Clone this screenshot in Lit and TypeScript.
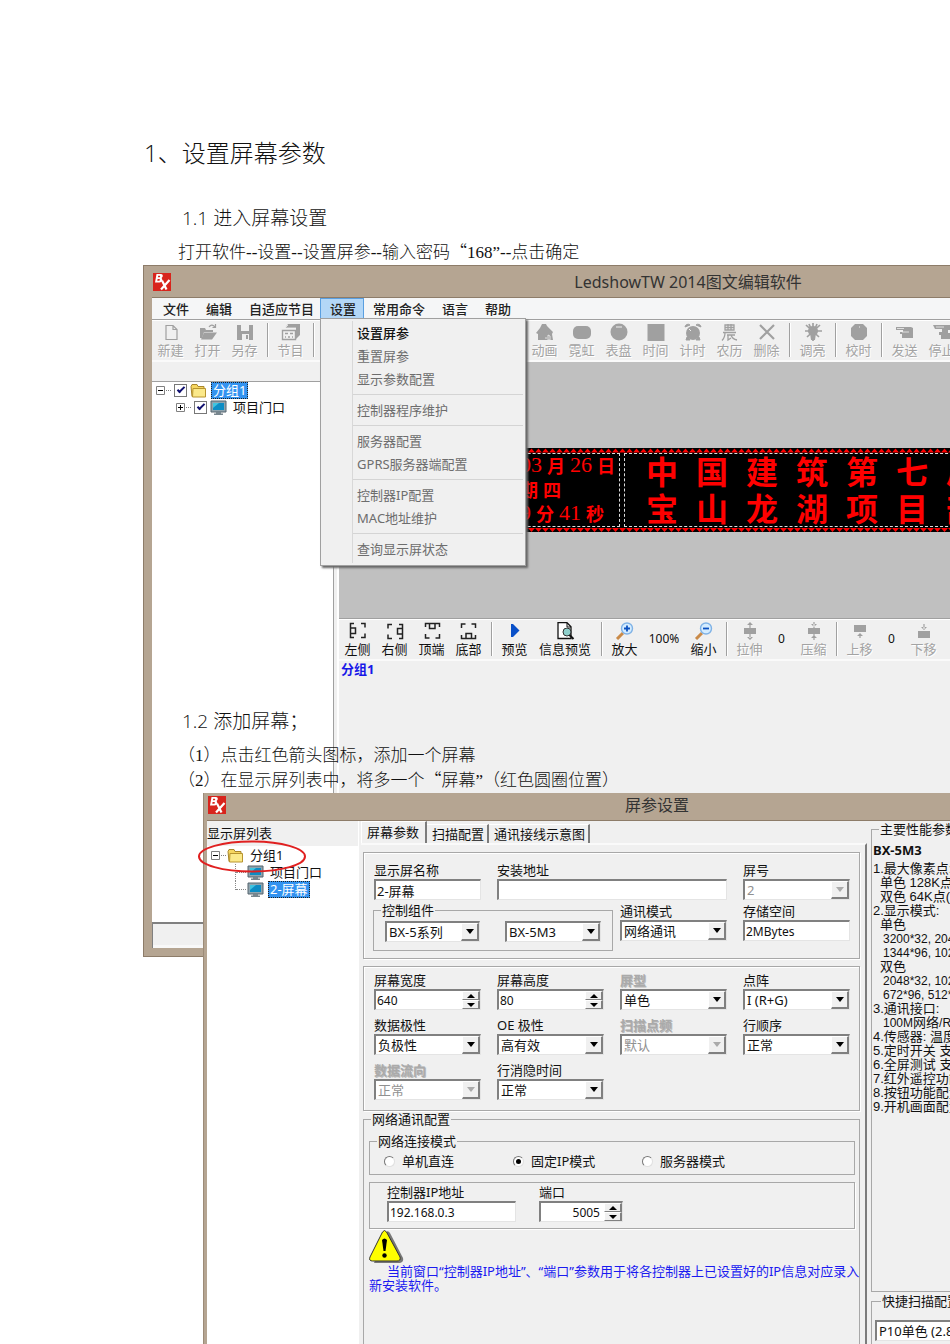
import { LitElement, html, svg, css, nothing, TemplateResult, SVGTemplateResult } from "lit";
import { customElement, state } from "lit/decorators.js";
import { classMap } from "lit/directives/class-map.js";

type Icon = SVGTemplateResult;

const G = "#a0a0a0";

const icons: Record<string, Icon> = {
  create: svg`<path d="M5 2.5h7l4 4v10H5z M12 2.5v4h4" fill="none" stroke="${G}" stroke-width="1.2"/>`,
  open: svg`<path d="M2 5h5l1 2h7v2H6l-2 6H2z" fill="${G}"/><path d="M6 9.500h13l-5 7H3z" fill="${G}"/><path d="M11 4c2-3 4-2 6 0M17.500 1v3.500h-3" fill="none" stroke="${G}" stroke-width="1.200"/>`,
  save: svg`<path d="M2 2h16v15H2z" fill="${G}"/><path d="M6 2h8v6H6z M7 11h7v6H7z" fill="#f0f0f0"/><path d="M11 12h2v4h-2z" fill="${G}"/>`,
  program: svg`<path d="M7 1h12v11l-4 4V5H4z" fill="${G}"/><path d="M4 5l3-3M4 5h11" stroke="#f0f0f0" stroke-width=".8"/><path d="M1.500 7.500h13v9h-13z" fill="#f0f0f0" stroke="${G}" stroke-width="1.400"/><path d="M4 10.500h3M9 10.500h3M4 14h1M7 14h2M11 14h1" stroke="${G}" stroke-width="1.400"/>`,
  house: svg`<path d="M7 1h4l1 2 6 6-1 2 1 6H3V11L1 10l4-5z" fill="${G}"/><path d="M13 12l2 1v4h-2zM10 15h2" stroke="#f0f0f0" fill="none" stroke-width=".8"/>`,
  neon: svg`<rect x="1" y="3" width="18" height="13" rx="5" fill="${G}"/>`,
  dial: svg`<circle cx="10" cy="9" r="8.500" fill="${G}"/><path d="M7 4h6" stroke="#f0f0f0" stroke-width="1"/>`,
  square: svg`<path d="M1.500 1h17v17h-17z" fill="${G}"/>`,
  alarm: svg`<circle cx="10" cy="10" r="7" fill="${G}"/><path d="M2 4a3 3 0 0 1 5-2zM18 4a3 3 0 0 0-5-2zM4 14l-1 3h4zM16 14l1 3h-4z" fill="${G}" stroke="${G}"/><path d="M6 6l2 2" stroke="#f0f0f0"/>`,
  lunar: svg`<path d="M5 2h9v5H5z M5 4.500h9 M8 1v6 M11 1v6 M3 9.500h13 M5 9.500c0 4-1 6-3 8 M7 12h8 M8 12v5l3-2 M11 12c1 3 3 4.500 6 5" fill="none" stroke="${G}" stroke-width="1.300"/>`,
  cross: svg`<path d="M3 2l14 14M17 2L3 16" stroke="${G}" stroke-width="2.200"/>`,
  bright: svg`<circle cx="10" cy="8" r="5" fill="${G}"/><path d="M10 0v18M3 2l13 12M17 2L4 14M2 8h17M6 1l3 7M14 1l-3 7" stroke="${G}" stroke-width="1.700"/><path d="M7 10h6l-1 7H8z" fill="${G}"/>`,
  octagon: svg`<path d="M6 1h8l4 4v8l-4 4H6l-4-4V5z" fill="${G}"/><path d="M10 4h1" stroke="#f0f0f0"/>`,
  send: svg`<path d="M1 4h15l2 1v10H7v-4H5V9h3V7H1z" fill="${G}"/><path d="M2 5.500h7M7 9h7" stroke="#f0f0f0" stroke-width=".8"/>`,
  halt: svg`<path d="M1 2h17v5h-2v3h3v6H9v-4H7V9h3V6H3z" fill="${G}"/><path d="M4 4h8" stroke="#f0f0f0" stroke-width=".8"/>`,
  play: svg`<path d="M6 2h2l6.500 6.500L8 15H6z" fill="#0a50c8"/>`,
  inspect: svg`<path d="M3 .7h9l4 4V16.500H3z" fill="#fff" stroke="#111" stroke-width="1.300"/><path d="M12 1v4h4" fill="none" stroke="#111"/><circle cx="12" cy="10" r="4" fill="#8fd0cc" stroke="#333"/><path d="M14.500 13l4 4" stroke="#111" stroke-width="2"/>`,
  zoomIn: svg`<path d="M8 11l-6 6" stroke="#c98a48" stroke-width="3"/><circle cx="12" cy="6.500" r="5.500" fill="#d4ecff" stroke="#7fb2e6" stroke-width="1.400"/><path d="M9 6.500h6M12 3.500v6" stroke="#0b50c0" stroke-width="1.800"/>`,
  zoomOut: svg`<path d="M8 11l-6 6" stroke="#c98a48" stroke-width="3"/><circle cx="12" cy="6.500" r="5.500" fill="#d4ecff" stroke="#7fb2e6" stroke-width="1.400"/><path d="M9 6.500h6" stroke="#0b50c0" stroke-width="1.800"/>`,
  stretch: svg`<path d="M4 6h12v6H4z M10 0l3 3H7z M10 18l3-3H7z M9.400 2h1.200v14H9.400z" fill="${G}"/>`,
  shrink: svg`<path d="M4 6h12v6H4z M10 5l3-3H7z M10 13l3 3H7z M9.400 0h1.200v18H9.400z" fill="${G}"/>`,
  up: svg`<path d="M4 3h12v7H4z M10 11l3 3H7z M9.400 12h1.200v4H9.400z" fill="${G}"/>`,
  down: svg`<path d="M4 9h12v7H4z M10 8l3-3H7z M9.400 2h1.200v5H9.400z" fill="${G}"/>`,
};

for (const [name, turn] of [["left", 0], ["right", 180], ["top", 90], ["bottom", 270]] as const) {
  icons[name] = svg`<g transform="rotate(${turn} 10 9)" fill="none" stroke="#222" stroke-width="1.500">
    <path d="M6 1.500H2.500v14H6M2.500 6h5v5.500h-5M13 1.500h4v4M17 11.500v4h-4"/></g>`;
}

const icon = (name: string) =>
  html`<svg class="icon" viewBox="0 0 20 18" aria-hidden="true">${icons[name]}</svg>`;

const logo = html`<svg class="logo" viewBox="0 0 18 18" aria-hidden="true">
  <rect width="18" height="18" fill="#d8241c"/>
  <path fill="#fff" fill-rule="evenodd" d="M3.500 1h4.500c2.300 0 2.400 3.300.3 4 1.700.6 1.200 4.500-1.800 4.500H2zM5.200 2.700l-.3 1.500h1.600c.9 0 .9-1.500.2-1.500zM4.600 5.900l-.3 1.800h1.800c1 0 1-1.800.2-1.800z"/>
  <path d="M9 7.500l4.500 9M16.500 7L8 16.500" stroke="#fff" stroke-width="2.200"/>
</svg>`;

const folder = html`<svg class="glyph" viewBox="0 0 17 15" aria-hidden="true">
  <path d="M1 3l1-2h5l1 2h6v10H2z" fill="#f6d660" stroke="#a8862c"/>
  <path d="M3 5h12.500v8.500H2.500z" fill="#fbe98a" stroke="#b8942e"/></svg>`;

const monitor = html`<svg class="glyph" viewBox="0 0 17 16" aria-hidden="true">
  <path d="M1 1h15v11H1z" fill="#8fa4ae" stroke="#56656e"/>
  <path d="M3 3h11v7H3z" fill="#0c8cc4"/><path d="M3 3h6L3 8z" fill="#3fc4e0"/>
  <path d="M6 12h5v1.500h2V15H4v-1.500h2z" fill="#78868e"/></svg>`;

const expander = (open: boolean) => html`<svg class="expander" viewBox="0 0 16 9" aria-hidden="true">
  <path d="M.5.5h8v8h-8z" fill="#fff" stroke="#808080"/>
  <path d="${open ? "M2 4.500h5" : "M2 4.500h5M4.500 2v5"}" stroke="#000"/>
  <path d="M10 4.500h6" stroke="#808080" stroke-dasharray="1 1"/></svg>`;

const zigzag = (id: string, down: boolean) => html`<svg class="zigzag" width="100%" height="5" aria-hidden="true">
  <defs><pattern id=${id} width="7" height="5" patternUnits="userSpaceOnUse">
    <path d=${down ? "M0 1h7l-3.500 4z" : "M0 4.500h7L3.500.5z"} fill="#f00"/>
  </pattern></defs><rect width="100%" height="5" fill="url(#${id})"/></svg>`;

interface Tool { label: string; icon: string; off?: boolean; wide?: boolean }

@customElement("app-root")
export class AppRoot extends LitElement {
  static styles = css`
    :host {
      display: block;
      overflow: clip;
      background: #fff;
      color: #111;
      --ui: "Noto Sans", "Noto Sans CJK SC", sans-serif;
      --face: #f0f0f0;
      --frame: #b5a592;
      --line: #a0a0a0;
      font-family: var(--ui);
      font-size: 13px;
    }
    *, *::before { box-sizing: border-box; }
    button, input, select { font: inherit; color: inherit; margin: 0; padding: 0; border: 0; background: none; border-radius: 0; }
    .page { min-height: 100vh; padding-top: 137px; display: flex; flex-direction: column; }
    h1, h2, h3, p { margin: 0; font-weight: 300; white-space: nowrap; }
    .doc-h1 { font: 300 24px/32px "Open Sans", "Noto Sans CJK SC", sans-serif; padding-left: 144px; }
    .doc-h2 { font: 300 19px/30px "Open Sans", "Noto Sans CJK SC", sans-serif; padding-left: 182px; margin-bottom: 7px; }
    .first { margin-top: 34px; }
    .doc-p { font: 300 17px/25px "Liberation Serif", "Noto Sans CJK SC", serif; padding-left: 178px; text-spacing-trim: space-all; }
    .cjk { font-family: "Noto Sans CJK SC", sans-serif; line-height: 1px; }
    .stack { display: grid; flex: 1; }
    .stack > * { grid-area: 1 / 1; min-width: 0; }
    .layer { padding-top: 441px; display: flex; flex-direction: column; pointer-events: none; z-index: 2; }

    /* windows */
    .window { background: var(--frame); pointer-events: auto; display: flex; flex-direction: column; }
    .main { margin-left: 143px; width: calc(100% + 140px); align-self: start; border: 1px solid #8d7c69; padding: 0 8px 8px; }
    .dialog { margin-left: 203px; width: calc(100% - 42px); flex: 1; padding: 0 4px 0 3px; border-left: 1px solid #9c8b78; }
    .title { display: grid; align-items: center; font-size: 16px; color: #333; }
    .title > * { grid-area: 1 / 1; }
    .title h3 { font-size: 16px; font-weight: 400; text-align: center; line-height: 22px; }
    .main .title { height: 31px; }
    .dialog .title { height: 27px; padding-bottom: 4px; }
    .logo { width: 18px; height: 18px; margin-left: 1px; }

    /* menu */
    .menubar { display: flex; gap: 1px; height: 22px; background: #f5f6f7; padding-left: 3px; border-top: 1px solid #8d7c69; }
    .menubar button { line-height: 20px; padding: 0 8px; color: #222; font-weight: 500; white-space: nowrap; }
    .holder { position: relative; display: flex; }
    .menubar .active { background: #b3d7f7; margin-left: -3px; padding-left: 10px; box-shadow: inset 0 0 0 1px #5a9fe0; }
    .menu { position: absolute; z-index: 1; left: -3px; top: 20px; width: 206px; background: var(--face); border: 1px solid var(--line); box-shadow: 2px 2px 2px #666; padding: 3px 2px 4px 0; display: flex; flex-direction: column; }
    .menu::before { content: ""; position: absolute; left: 31px; top: 2px; bottom: 2px; width: 1px; background: #d8d8d8; }
    .menu button { height: 23px; line-height: 23px; text-align: left; padding: 0 0 0 36px; color: #6d6d6d; font-weight: 400; }
    .menu .on { color: #111; font-weight: 500; }
    .menu hr { width: 170px; height: 1px; margin: 3px 0 4px 32px; border: 0; background: #d4d4d4; }

    /* toolbars */
    .tools { display: flex; height: 43px; background: var(--face); border-top: 1px solid var(--line); border-bottom: 2px solid #fafafa; box-shadow: inset 0 1px #fff; overflow: hidden; flex: none; }
    .tool { width: 37px; flex: none; display: flex; flex-direction: column; align-items: center; padding-top: 3px; line-height: 18px; white-space: nowrap; }
    .tool.wide { width: 64px; }
    .tool.off { color: #a3a3a3; text-shadow: 1px 1px #fff; }
    .icon { width: 20px; height: 18px; display: block; flex: none; }
    .rule { width: 9px; flex: none; padding: 3px 0 3px 4px; }
    .rule::before { content: ""; display: block; width: 2px; height: 100%; border-left: 1px solid var(--line); background: #fff; }
    .behind { width: 208px; flex: none; }
    .value { flex: none; text-align: center; line-height: 40px; font-size: 12px; width: 27px; }
    .value.pct { width: 42px; }

    .panes { display: grid; grid-template-columns: 182px 5px 1fr; min-height: 560px; }
    .side { background: #fff; display: flex; flex-direction: column; border-right: 1px solid var(--line); }
    .side-head { height: 20px; background: var(--face); border-bottom: 1px solid var(--line); }
    .split { background: var(--face); border-right: 2px solid #fff; }
    .work { display: flex; flex-direction: column; background: var(--face); min-width: 0; }
    .canvas { background: #c0c0c0; height: 256px; display: flex; align-items: center; }
    .group-name { color: #1818e8; font-weight: 700; font-size: 13px; padding: 0 2px; line-height: 16px; }
    .status { height: 26px; background: var(--face); border: 1px solid #808080; border-width: 2px 0 0 1px; box-shadow: inset 0 -3px #f8f8f8; }

    /* trees */
    .tree { margin: 0; list-style: none; padding: 0 0 0 4px; line-height: 17px; }
    .tree li { display: flex; align-items: center; height: 17px; white-space: nowrap; }
    .expander { width: 16px; height: 9px; flex: none; margin-right: 2px; }
    .glyph { width: 17px; height: 16px; margin-right: 4px; flex: none; }
    .tick { appearance: none; width: 13px; height: 13px; border: 1px solid #777; background: #fff; margin-right: 3px; display: grid; place-items: center; flex: none; }
    .tick:checked::before { content: ""; width: 8px; height: 4px; border: solid #101070; border-width: 0 0 2px 2px; transform: rotate(-45deg); margin-top: -3px; }
    .child { padding-left: 20px; }
    .name { padding: 0 2px; height: 17px; line-height: 16px; }
    .picked { background: #3393f0; color: #fff; outline: 1px dotted #222; outline-offset: -1px; }

    /* sign */
    .sign { flex: 1; background: #000; color: #f00; display: flex; flex-direction: column; overflow: hidden; }
    .zigzag { display: block; flex: none; }
    .fields { display: flex; gap: 4px; height: 74px; }
    .clock { width: 281px; flex: none; padding-left: 181px; border: 1px dashed #ddd; border-left: 0; }
    .clock div { display: flex; gap: 5px; height: 24px; font: 700 18px/22px "Noto Sans CJK SC", sans-serif; }
    .clock .digits { font: 400 22px/22px "Liberation Serif", serif; }
    .banner { flex: 1; border: 1px dashed #ddd; border-right: 0; padding-left: 12px; }
    .banner div { display: flex; height: 37px; }
    .banner span { width: 50px; flex: none; text-align: center; font: 700 32px/32px "Noto Sans CJK SC", sans-serif; }

    /* dialog */
    .sheet { flex: 1; display: grid; grid-template-columns: 152px 510px 1fr; background: var(--face); border-top: 1px solid #8d7c69; min-height: 520px; }
    .list { background: #fff; border-right: 1px solid #fff; position: relative; }
    .list-head { background: var(--face); height: 25px; line-height: 24px; }
    .ring { position: absolute; left: -10px; top: 19px; width: 110px; height: 33px; }
    .list .expander { margin-right: 0; }
    .list .tree { padding-top: 1px; }
    .branch { padding-left: 24px; }
    .branch .twig { width: 12px; height: 100%; border-left: 1px dotted #888; position: relative; }
    .twig::before { content: ""; position: absolute; top: 8px; width: 10px; border-top: 1px dotted #888; }
    .twig.last { align-self: flex-start; height: 9px; }
    .book { display: flex; flex-direction: column; padding-left: 2px; }
    .tabs { display: flex; align-items: flex-end; height: 22px; }
    .tabs button { height: 19px; line-height: 18px; padding: 0 3px 0 5px; border-top: 1px solid #fff; border-right: 2px solid #7c7c7c; white-space: nowrap; }
    .tabs .current { height: 22px; line-height: 19px; padding: 0 6px 0 5px; border-left: 1px solid #fff; }
    .leaf { flex: 1; border-top: 2px solid #fafafa; border-right: 2px solid #7c7c7c; margin-right: 2px; padding: 7px 5px 0 2px; display: flex; flex-direction: column; gap: 7px; }
    .box { margin: 0; min-width: 0; border: 1px solid #a8a8a8; box-shadow: 1px 1px #fff, inset 1px 1px #fff; padding: 8px 10px 7px; display: grid; grid-template-columns: repeat(4, 107px); column-gap: 16px; row-gap: 2px; }
    .box.dense { padding: 4px 10px 10px; row-gap: 6px; }
    .cell { display: flex; flex-direction: column; min-width: 0; }
    .cell.two { grid-column: span 2; }
    .cell label { line-height: 18px; height: 18px; white-space: nowrap; }
    .cell .dim { color: #aaa; text-shadow: 1px 1px #bbb; font-weight: 700; }
    .well { height: 21px; width: 100%; background: #fff; border: solid; border-width: 2px 1px 1px 2px; border-color: #808080 #e4e4e4 #e4e4e4 #808080; padding: 0 1px; }
    input.well, .combo select, .spin input { min-width: 0; font-size: 13px; }
    input.num, .spin input { font-size: 12px; }
    .combo { display: grid; padding: 0; }
    .combo > * { grid-area: 1 / 1; min-width: 0; }
    .combo select { appearance: none; padding-left: 2px; height: 18px; line-height: 18px; width: 100%; opacity: 1; outline: 0; }
    .combo select:disabled { color: #909090; }
    .drop { justify-self: end; width: 18px; background: var(--face); border: solid; border-width: 1px 2px 2px 1px; border-color: #fff #808080 #808080 #fff; display: grid; place-items: center; pointer-events: none; }
    .drop::before { content: ""; border: 4px solid transparent; border-top: 5px solid #000; border-bottom: 0; }
    .drop.grey::before { border-top-color: #aaa; }
    .spin { display: flex; padding: 0; }
    .spin input { flex: 1; width: 0; padding-left: 1px; appearance: textfield; }
    .spin input::-webkit-inner-spin-button { display: none; }
    .spin.right input { text-align: right; padding-right: 4px; }
    .steps { width: 18px; display: flex; flex-direction: column; }
    .steps button { flex: 1; background: var(--face); border: solid; border-width: 1px 2px 1px 1px; border-color: #fff #808080 #808080 #fff; display: grid; place-items: center; }
    .steps button::before { content: ""; border: 4px solid transparent; border-bottom: 4px solid #000; border-top: 0; }
    .steps .less::before { border-top: 4px solid #000; border-bottom: 0; }
    fieldset { margin: 0; padding: 0; min-width: 0; border: 1px solid #a8a8a8; }
    legend { line-height: 16px; padding: 0 1px; margin-left: 7px; white-space: nowrap; }
    .parts { grid-column: span 2; margin: 0 -9px 0 -1px; height: 49px; padding: 0 11px; }
    .parts legend { margin-left: -4px; }
    .parts .pair { display: grid; grid-template-columns: 95px 96px; justify-content: space-between; margin-top: 3px; }
    .net { flex: 1; border-bottom: 0; padding: 0 4px 0 5px; margin-top: -7px; }
    .net .outer { margin-left: 2px; }
    .modes { height: 42px; margin-top: 6px; }
    .modes div { display: flex; padding: 3px 0 0 14px; }
    .modes label { width: 129px; display: flex; align-items: center; gap: 7px; line-height: 18px; }
    .modes input { appearance: none; width: 11px; height: 11px; border-radius: 50%; border: 1px solid #fff; border-color: #777 #e0e0e0 #e0e0e0 #777; background: #fff; display: grid; place-items: center; }
    .modes input:checked::before { content: ""; width: 5px; height: 5px; border-radius: 50%; background: #000; }
    .address { margin-top: 7px; display: grid; grid-template-columns: 129px 84px; column-gap: 23px; padding: 0 17px 6px; border: 1px solid #a8a8a8; box-shadow: 1px 1px #fff; }
    .warn { display: block; width: 36px; height: 35px; }
    .note { color: #1a1af0; line-height: 14px; font-weight: 400; text-indent: 18px; }
    .note.follow { text-indent: 0; }

    .facts { display: flex; flex-direction: column; gap: 1px; padding: 0 6px 0 2px; white-space: nowrap; }
    .facts legend { margin-left: 6px; }
    .perf { height: 471px; padding: 0 1px; }
    .perf strong { display: block; line-height: 17px; margin: 5px 0 3px; }
    .perf div { line-height: 14px; white-space: pre; font-family: "Liberation Sans", "Noto Sans CJK SC", sans-serif; }
    .perf .in { padding-left: 7px; }
    .perf .deep { padding-left: 10px; font-size: 12px; }
    .perf .deep .cjk { font-size: 13px; }
    .quick { height: 52px; border-bottom: 0; padding: 0 3px; }
    .quick .combo { margin-top: 11px; }
  `;

  @state() private mode = "fixed";

  private tool(t: Tool) {
    return html`<button class=${classMap({ tool: true, off: !!t.off, wide: !!t.wide })} ?disabled=${!!t.off}>
      ${icon(t.icon)}<span>${t.label}</span></button>`;
  }

  private off(label: string, name: string) {
    return this.tool({ label, icon: name, off: true });
  }

  private combo(id: string, value: string, disabled = false, label?: string) {
    return html`<div class="well combo">
      <select id=${id} ?disabled=${disabled} aria-label=${label ?? nothing}><option>${value}</option></select>
      <span class=${classMap({ drop: true, grey: disabled })}></span></div>`;
  }

  private spin(id: string, value: number, right = false) {
    return html`<div class=${classMap({ well: true, spin: true, right })}>
      <input id=${id} type="number" .value=${String(value)}>
      <span class="steps"><button class="more" aria-label="+"></button><button class="less" aria-label="-"></button></span></div>`;
  }

  private cell(id: string, label: string, control: TemplateResult, dim = false, two = false) {
    return html`<div class=${classMap({ cell: true, two })}>
      <label for=${id} class=${dim ? "dim" : ""}>${label}</label>${control}</div>`;
  }

  private mainWindow() {
    const rule = html`<span class="rule"></span>`;
    const groups: string[][] = [
      ["重置屏参", "显示参数配置"],
      ["控制器程序维护"],
      ["服务器配置", "GPRS服务器端配置"],
      ["控制器IP配置", "MAC地址维护"],
      ["查询显示屏状态"],
    ];
    return html`<section class="window main">
      <header class="title">${logo}<h3>LedshowTW 2014图文编辑软件</h3></header>
      <nav class="menubar">
        <button>文件</button><button>编辑</button><button>自适应节目</button>
        <div class="holder"><button class="active">设置</button>
          <div class="menu"><button class="on">设置屏参</button>
            ${groups.map((g, i) => html`${i ? html`<hr>` : nothing}${g.map((m) => html`<button>${m}</button>`)}`)}
          </div>
        </div>
        <button>常用命令</button><button>语言</button><button>帮助</button>
      </nav>
      <div class="tools">
        ${this.off("新建", "create")}${this.off("打开", "open")}${this.off("另存", "save")}${rule}
        ${this.off("节目", "program")}${rule}<span class="behind"></span>
        ${this.off("动画", "house")}${this.off("霓虹", "neon")}${this.off("表盘", "dial")}${this.off("时间", "square")}
        ${this.off("计时", "alarm")}${this.off("农历", "lunar")}${this.off("删除", "cross")}${rule}
        ${this.off("调亮", "bright")}${rule}${this.off("校时", "octagon")}${rule}
        ${this.off("发送", "send")}${this.off("停止", "halt")}
      </div>
      <div class="panes">
        <aside class="side">
          <div class="side-head"></div>
          <ul class="tree">
            <li>${expander(true)}<input class="tick" type="checkbox" checked aria-label="分组1">${folder}<span class="name picked">分组1</span></li>
            <li class="child">${expander(false)}<input class="tick" type="checkbox" checked aria-label="项目门口">${monitor}<span class="name">项目门口</span></li>
          </ul>
        </aside>
        <div class="split"></div>
        <div class="work">
          <div class="canvas"><div class="sign">
            ${zigzag("zig-up", false)}
            <div class="fields">
              <div class="clock">
                <div><span class="digits">03</span>月<span class="digits">26</span>日</div>
                <div><span>期</span><span>四</span></div>
                <div><span class="digits">9</span>分<span class="digits">41</span>秒</div>
              </div>
              <div class="banner">
                <div>${[..."中国建筑第七局"].map((c) => html`<span>${c}</span>`)}</div>
                <div>${[..."宝山龙湖项目部"].map((c) => html`<span>${c}</span>`)}</div>
              </div>
            </div>
            ${zigzag("zig-down", true)}
          </div></div>
          <div class="tools">
            ${this.tool({ label: "左侧", icon: "left" })}${this.tool({ label: "右侧", icon: "right" })}
            ${this.tool({ label: "顶端", icon: "top" })}${this.tool({ label: "底部", icon: "bottom" })}${rule}
            ${this.tool({ label: "预览", icon: "play" })}${this.tool({ label: "信息预览", icon: "inspect", wide: true })}${rule}
            ${this.tool({ label: "放大", icon: "zoomIn" })}<span class="value pct">100%</span>${this.tool({ label: "缩小", icon: "zoomOut" })}${rule}
            ${this.off("拉伸", "stretch")}<span class="value">0</span>${this.off("压缩", "shrink")}${rule}
            ${this.off("上移", "up")}<span class="value">0</span>${this.off("下移", "down")}
          </div>
          <div class="group-name">分组1</div>
        </div>
      </div>
      <div class="status"></div>
    </section>`;
  }

  private dialog() {
    const modes = [["single", "单机直连"], ["fixed", "固定IP模式"], ["server", "服务器模式"]];
    return html`<section class="window dialog">
      <header class="title">${logo}<h3>屏参设置</h3></header>
      <div class="sheet">
        <aside class="list">
          <div class="list-head">显示屏列表</div>
          <ul class="tree">
            <li>${expander(true)}${folder}<span class="name">分组1</span></li>
            <li class="branch"><span class="twig"></span>${monitor}<span class="name">项目门口</span></li>
            <li class="branch"><span class="twig last"></span>${monitor}<span class="name picked">2-屏幕</span></li>
          </ul>
          <svg class="ring" viewBox="0 0 110 33" aria-hidden="true"><ellipse cx="55" cy="16.500" rx="53" ry="15" fill="none" stroke="#e02020" stroke-width="2"/></svg>
        </aside>
        <div class="book">
          <div class="tabs"><button class="current">屏幕参数</button><button>扫描配置</button><button>通讯接线示意图</button></div>
          <div class="leaf">
            <div class="box">
              ${this.cell("name", "显示屏名称", html`<input id="name" class="well" .value=${"2-屏幕"}>`)}
              ${this.cell("place", "安装地址", html`<input id="place" class="well">`, false, true)}
              ${this.cell("number", "屏号", this.combo("number", "2", true))}
              <fieldset class="parts"><legend>控制组件</legend>
                <div class="pair">${this.combo("series", "BX-5系列", false, "系列")}${this.combo("model", "BX-5M3", false, "型号")}</div>
              </fieldset>
              ${this.cell("comm", "通讯模式", this.combo("comm", "网络通讯"))}
              ${this.cell("storage", "存储空间", html`<input id="storage" class="well num" .value=${"2MBytes"}>`)}
            </div>
            <div class="box dense">
              ${this.cell("width", "屏幕宽度", this.spin("width", 640))}
              ${this.cell("height", "屏幕高度", this.spin("height", 80))}
              ${this.cell("type", "屏型", this.combo("type", "单色"), true)}
              ${this.cell("matrix", "点阵", this.combo("matrix", "I  (R+G)"))}
              ${this.cell("polarity", "数据极性", this.combo("polarity", "负极性"))}
              ${this.cell("oe", "OE 极性", this.combo("oe", "高有效"))}
              ${this.cell("freq", "扫描点频", this.combo("freq", "默认", true), true)}
              ${this.cell("order", "行顺序", this.combo("order", "正常"))}
              ${this.cell("flow", "数据流向", this.combo("flow", "正常", true), true)}
              ${this.cell("blank", "行消隐时间", this.combo("blank", "正常"))}
            </div>
            <fieldset class="net"><legend class="outer">网络通讯配置</legend>
              <fieldset class="modes"><legend>网络连接模式</legend>
                <div>${modes.map(([v, t]) => html`<label><input type="radio" name="mode" .checked=${this.mode === v}
                  @change=${() => (this.mode = v)}>${t}</label>`)}</div>
              </fieldset>
              <div class="address">
                ${this.cell("ip", "控制器IP地址", html`<input id="ip" class="well num" .value=${"192.168.0.3"}>`)}
                ${this.cell("port", "端口", this.spin("port", 5005, true))}
              </div>
              <svg class="warn" viewBox="0 0 36 35" aria-hidden="true">
                <path d="M17 3q2-2 4 1l13 25q1 4-3 5H5z" fill="#777"/>
                <path d="M13.500 3q2-3 4 0l13.500 25q1 4-3 4H3.500q-4 0-2.500-4z" fill="#ffff00" stroke="#333"/>
                <path d="M13 11q2.500-3 5 0l-1.500 11h-2z"/><circle cx="15.500" cy="26.500" r="2.200"/>
              </svg>
              <p class="note">当前窗口“控制器IP地址”、“端口”参数用于将各控制器上已设置好的IP信息对应录入</p>
              <p class="note follow">新安装软件。</p>
            </fieldset>
          </div>
        </div>
        <div class="facts">
          <fieldset class="perf"><legend>主要性能参数</legend>
            <strong>BX-5M3</strong>
            <div>1.最大像素点:</div>
            <div class="in">单色 128K点(</div>
            <div class="in">双色 64K点( 6</div>
            <div>2.显示模式:</div>
            <div class="in">单色</div>
            <div class="deep">3200*32, 2048</div>
            <div class="deep">1344*96, 1024</div>
            <div class="in">双色</div>
            <div class="deep">2048*32, 1024</div>
            <div class="deep">672*96, 512*</div>
            <div>3.通讯接口:</div>
            <div class="deep">100M<span class="cjk">网络</span>/RS</div>
            <div>4.传感器: 温度</div>
            <div>5.定时开关 支</div>
            <div>6.全屏测试 支</div>
            <div>7.红外遥控功能</div>
            <div>8.按钮功能配置</div>
            <div>9.开机画面配置</div>
          </fieldset>
          <fieldset class="quick"><legend>快捷扫描配置</legend>
            ${this.combo("quick", "P10单色 (2.8)", false, "快捷扫描配置")}
          </fieldset>
        </div>
      </div>
    </section>`;
  }

  render() {
    const q = html`<span class="cjk">“</span>`;
    return html`<main class="page">
      <h1 class="doc-h1">1、设置屏幕参数</h1>
      <h2 class="doc-h2 first">1.1 进入屏幕设置</h2>
      <p class="doc-p">打开软件--设置--设置屏参--输入密码${q}168”--点击确定</p>
      <div class="stack">
        ${this.mainWindow()}
        <div class="layer">
          <h2 class="doc-h2">1.2 添加屏幕；</h2>
          <p class="doc-p">（1）点击红色箭头图标，添加一个屏幕</p>
          <p class="doc-p">（2）在显示屏列表中，将多一个${q}屏幕”（红色圆圈位置）</p>
          ${this.dialog()}
        </div>
      </div>
    </main>`;
  }
}
